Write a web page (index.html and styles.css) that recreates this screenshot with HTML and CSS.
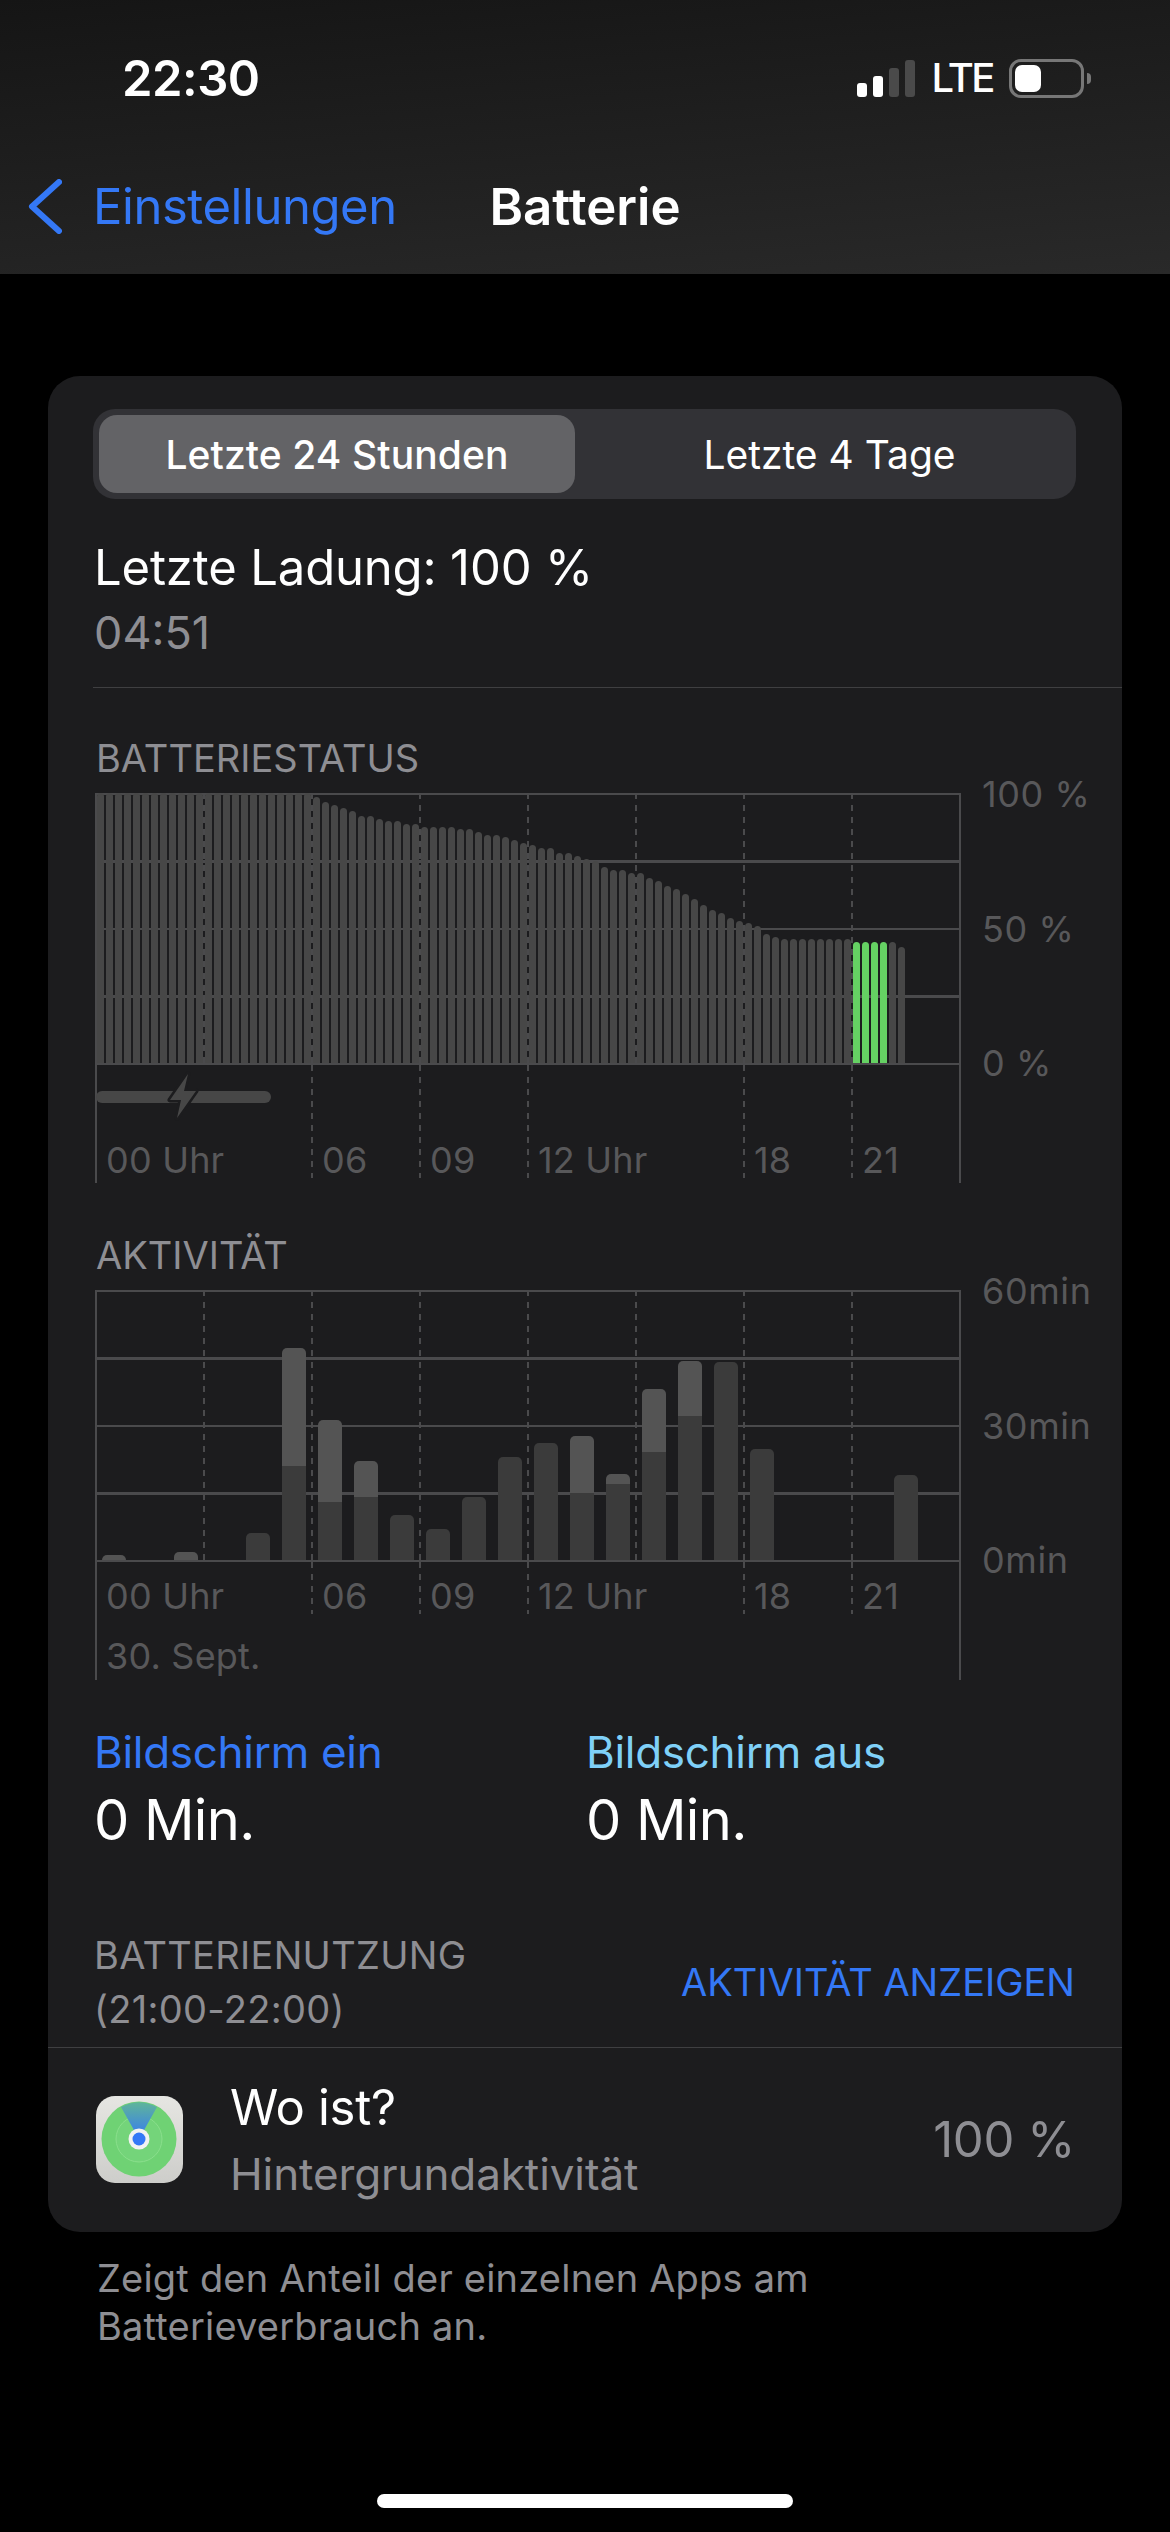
FILE: index.html
```html
<!DOCTYPE html>
<html lang="de">
<head>
    <meta charset="UTF-8">
    <meta name="viewport" content="width=device-width, initial-scale=1.0">
    <title>Batterie</title>
    <link rel="stylesheet" href="styles.css">
</head>
<body>
    <div class="page">
        <header class="top-bar">
            <div class="status">
                <span class="time">22:30</span>
                <div class="status-right">
                    <div class="signal">
                        <i class="s1"></i><i class="s2"></i><i class="s3"></i><i class="s4"></i>
                    </div>
                    <span class="lte">LTE</span>
                    <div class="battery"><div class="battery-fill"></div></div>
                    <div class="battery-nub"></div>
                </div>
            </div>
            <nav class="nav">
                <a class="back">
                    <svg class="chevron" width="34" height="55" viewBox="0 0 34 55"><path d="M31 3 L4 27.5 L31 52" fill="none" stroke="#3478f6" stroke-width="6" stroke-linecap="round" stroke-linejoin="round"/></svg>
                    <span>Einstellungen</span>
                </a>
                <h1>Batterie</h1>
            </nav>
        </header>

        <main class="card">
            <div class="segment">
                <div class="segment-item selected">Letzte 24 Stunden</div>
                <div class="segment-item">Letzte 4 Tage</div>
            </div>

            <div class="last-charge">Letzte Ladung: 100 %</div>
            <div class="last-time">04:51</div>
            <div class="divider inset"></div>

            <section class="chart chart-battery">
                <h2 class="chart-title">BATTERIESTATUS</h2>
                <div class="plot-row">
                    <div class="plot">
                        <div class="bars" id="batteryBars"></div>
                        <div class="grid"><i></i><i></i><i></i><i></i><i></i><i></i><i></i><i></i></div>
                    </div>
                    <div class="y-labels"><span>100 %</span><span>50 %</span><span>0 %</span></div>
                </div>
                <div class="axis">
                    <div class="axis-cells">
                        <div class="axis-cell first">
                            <div class="charge">
                                <svg class="bolt" width="40" height="52" viewBox="0 0 40 52"><path d="M25 4 L7 30 L18 30 L14 48 L33 21 L21 21 Z" fill="#474747" stroke="#1c1c1e" stroke-width="5" stroke-linejoin="round" paint-order="stroke"/></svg>
                            </div>
                            <span>00 Uhr</span>
                        </div>
                        <div class="axis-cell"><span>06</span></div>
                        <div class="axis-cell"><span>09</span></div>
                        <div class="axis-cell"><span>12 Uhr</span></div>
                        <div class="axis-cell"><span>18</span></div>
                        <div class="axis-cell"><span>21</span></div>
                    </div>
                </div>
            </section>

            <section class="chart chart-activity">
                <h2 class="chart-title">AKTIVITÄT</h2>
                <div class="plot-row">
                    <div class="plot">
                        <div class="grid"><i></i><i></i><i></i><i></i><i></i><i></i><i></i><i></i></div>
                        <div class="bars" id="activityBars"></div>
                    </div>
                    <div class="y-labels"><span>60min</span><span>30min</span><span>0min</span></div>
                </div>
                <div class="axis">
                    <div class="axis-cells">
                        <div class="axis-cell first"><span>00 Uhr</span></div>
                        <div class="axis-cell"><span>06</span></div>
                        <div class="axis-cell"><span>09</span></div>
                        <div class="axis-cell"><span>12 Uhr</span></div>
                        <div class="axis-cell"><span>18</span></div>
                        <div class="axis-cell"><span>21</span></div>
                    </div>
                    <div class="axis-date">30. Sept.</div>
                </div>
            </section>

            <div class="stats">
                <div>
                    <div class="stat-label blue">Bildschirm ein</div>
                    <div class="stat-value">0 Min.</div>
                </div>
                <div>
                    <div class="stat-label light-blue">Bildschirm aus</div>
                    <div class="stat-value">0 Min.</div>
                </div>
            </div>

            <div class="usage-head">
                <div class="usage-title">BATTERIENUTZUNG<br>(21:00-22:00)</div>
                <a class="usage-link">AKTIVITÄT ANZEIGEN</a>
            </div>
            <div class="divider"></div>

            <div class="app-row">
                <svg class="app-icon" width="87" height="87" viewBox="0 0 87 87">
                    <defs>
                        <linearGradient id="iconBg" x1="0" y1="0" x2="0" y2="1">
                            <stop offset="0" stop-color="#e6e6e2"/>
                            <stop offset="1" stop-color="#cdcdca"/>
                        </linearGradient>
                        <linearGradient id="iconCone" x1="0" y1="0" x2="0" y2="1">
                            <stop offset="0" stop-color="#5fb59a"/>
                            <stop offset="1" stop-color="#3478f6"/>
                        </linearGradient>
                    </defs>
                    <rect width="87" height="87" rx="19" fill="url(#iconBg)"/>
                    <circle cx="43" cy="43" r="37.5" fill="#6fd274"/>
                    <circle cx="43" cy="43" r="23" fill="#74d47a" stroke="#8adf8c" stroke-width="1"/>
                    <path d="M43 43 L25 11 Q43 1.500 61 11 Z" fill="url(#iconCone)"/>
                    <circle cx="43" cy="43" r="10.500" fill="#f2f2f2"/>
                    <circle cx="43" cy="43" r="6.500" fill="#3478f6"/>
                </svg>
                <div class="app-text">
                    <div class="app-name">Wo ist?</div>
                    <div class="app-sub">Hintergrundaktivität</div>
                </div>
                <div class="app-percent">100 %</div>
            </div>
        </main>

        <p class="footnote">Zeigt den Anteil der einzelnen Apps am<br>Batterieverbrauch an.</p>

        <div class="home-bar"></div>
    </div>

    <script src="chart.js"></script>
</body>
</html>
```

FILE: styles.css
```css
* {
    margin: 0;
    padding: 0;
    box-sizing: border-box;
}

body {
    background: #000;
    color: #fff;
    font-family: 'Inter', 'Liberation Sans', sans-serif;
}

.page {
    width: 1170px;
    height: 2532px;
    display: flex;
    flex-direction: column;
    overflow: hidden;
}

/* status bar + navigation */
.top-bar {
    height: 274px;
    flex: none;
    background: linear-gradient(175deg, #151515, #292929);
}

.status {
    height: 156px;
    padding: 0 79px 0 122px;
    display: flex;
    align-items: center;
    justify-content: space-between;
}

.time {
    font-size: 49px;
    font-weight: 600;
    letter-spacing: -0.5px;
}

.status-right {
    display: flex;
    align-items: center;
}

.signal {
    display: flex;
    align-items: flex-end;
    gap: 6px;
    height: 37px;
    margin-right: 16px;
}

.signal i {
    width: 10px;
    background: #fff;
    border-radius: 3px;
}

.signal .s1 { height: 14px; }
.signal .s2 { height: 21px; }
.signal .s3 { height: 29px; background: #4a4a4a; }
.signal .s4 { height: 37px; background: #4a4a4a; }

.lte {
    font-size: 40px;
    font-weight: 500;
    line-height: 40px;
    letter-spacing: -2.5px;
    margin-right: 16px;
}

.battery {
    width: 75px;
    height: 39px;
    border: 3px solid #777;
    border-radius: 12px;
    padding: 3px;
}

.battery-fill {
    width: 26px;
    height: 100%;
    background: #fff;
    border-radius: 7px;
}

.battery-nub {
    width: 4px;
    height: 11px;
    margin-left: 3px;
    background: #777;
    border-radius: 0 4px 4px 0;
}

.nav {
    display: grid;
    grid-template-columns: 1fr auto 1fr;
    align-items: center;
    height: 100px;
    padding: 0 28px;
}

.back {
    display: flex;
    align-items: center;
    gap: 31px;
    color: #3478f6;
    font-size: 49px;
    letter-spacing: -0.45px;
}

.nav h1 {
    font-size: 51px;
    font-weight: 600;
}

/* main card */
.card {
    margin: 102px 48px 0;
    height: 1856px;
    flex: none;
    background: #1c1c1e;
    border-radius: 32px;
    overflow: hidden;
}

.segment {
    margin: 33px 46px 0 45px;
    height: 90px;
    padding: 6px;
    display: grid;
    grid-template-columns: 476px 1fr;
    background: #323236;
    border-radius: 22px;
}

.segment-item {
    display: flex;
    align-items: center;
    justify-content: center;
    font-size: 39px;
    letter-spacing: 0;
    padding-left: 14px;
}

.segment-item.selected {
    font-weight: 500;
    letter-spacing: 0.1px;
    background: #636366;
    border-radius: 18px;
    padding-left: 0;
}

.last-charge {
    margin: 39px 0 0 46px;
    font-size: 49px;
    line-height: 60px;
    letter-spacing: -0.15px;
}

.last-time {
    margin: 10px 0 0 46px;
    font-size: 45px;
    line-height: 50px;
    color: #8e8e93;
}

.divider {
    height: 1px;
    background: #3f3f41;
}

.divider.inset {
    margin: 29px 0 0 45px;
}

/* charts */
.chart {
    margin-left: 47px;
}

.chart-battery {
    margin-top: 47px;
}

.chart-activity {
    margin-top: 49px;
}

.chart-title {
    margin: 0 0 12px 1px;
    font-size: 38px;
    font-weight: 400;
    line-height: 46px;
    color: #8e8e93;
}

.plot-row {
    display: flex;
    align-items: flex-start;
}

.plot {
    position: relative;
    width: 866px;
    height: 272px;
    flex: none;
    border-left: 2px solid #4a4a4c;
    border-right: 2px solid #4a4a4c;
    background: repeating-linear-gradient(to bottom, #4a4a4c 0, #4a4a4c 2px, transparent 2px, transparent 67.5px);
}

.grid {
    position: absolute;
    inset: 0;
    display: grid;
    grid-template-columns: 106px repeat(7, 108px);
}

.grid i:not(:first-child),
.axis-cell:not(.first) {
    background: linear-gradient(#4a4a4c 6px, transparent 6px) left top / 2px 12px repeat-y;
}

.bars {
    position: absolute;
    left: 0;
    right: 0;
    bottom: 2px;
    top: 0;
    display: flex;
    align-items: flex-end;
}

#batteryBars {
    gap: 2px;
}

.battery-bar {
    width: 7px;
    flex: none;
    background: #474747;
    border-radius: 3.500px 3.500px 0 0;
}

.battery-bar.green {
    background: #65d163;
}

#activityBars {
    gap: 12px;
    padding-left: 5px;
}

.activity-bar {
    width: 24px;
    flex: none;
    display: flex;
    flex-direction: column;
    border-radius: 5px 5px 0 0;
    overflow: hidden;
}

.activity-bar .light { background: #545454; }
.activity-bar .dark { background: #3b3b3b; }

.y-labels {
    height: 309px;
    margin: -19px 0 -18px 21px;
    display: flex;
    flex-direction: column;
    justify-content: space-between;
    font-size: 36px;
    line-height: 40px;
    letter-spacing: 0.6px;
    color: #58585a;
}

.axis {
    width: 866px;
    height: 118px;
    border-left: 2px solid #4a4a4c;
    border-right: 2px solid #4a4a4c;
    font-size: 36px;
    line-height: 34px;
    letter-spacing: 0.2px;
    color: #58585a;
}

.axis-cells {
    display: grid;
    grid-template-columns: 214px 108px 108px 216px 108px 108px;
}

.axis-cell {
    display: flex;
    flex-direction: column;
    justify-content: flex-end;
    padding: 0 0 1px 11px;
}

.axis-cell.first {
    padding-left: 9px;
}

.chart-battery .axis-cell {
    height: 113px;
}

.chart-activity .axis-cell {
    height: 52px;
}

.charge {
    position: relative;
    width: 175px;
    height: 12px;
    margin: 0 0 40px -10px;
    background: #474747;
    border-radius: 6px;
}

.bolt {
    position: absolute;
    left: 67px;
    top: -21px;
}

.axis-date {
    margin: 25px 0 0 9px;
}

/* screen on/off */
.stats {
    margin: 45px 0 0 46px;
    display: grid;
    grid-template-columns: 492px 1fr;
}

.stat-label {
    font-size: 44px;
    line-height: 54px;
    letter-spacing: -0.3px;
}

.blue { color: #3478f6; }
.light-blue { color: #7fd0f8; }

.stat-value {
    margin-top: 6px;
    font-size: 56px;
    line-height: 70px;
    letter-spacing: -0.6px;
}

/* usage */
.usage-head {
    margin: 73px 47px 0 46px;
    display: flex;
    align-items: center;
    justify-content: space-between;
}

.usage-title {
    font-size: 38px;
    line-height: 54px;
    letter-spacing: 0.3px;
    color: #8e8e93;
}

.usage-link {
    font-size: 38px;
    color: #3478f6;
}

.usage-head + .divider {
    margin-top: 11px;
}

.app-row {
    height: 183px;
    padding: 0 47px 0 48px;
    display: flex;
    align-items: center;
}

.app-icon {
    flex: none;
    margin-right: 47px;
}

.app-text {
    flex: 1;
}

.app-name {
    font-size: 49px;
    line-height: 60px;
    letter-spacing: -0.3px;
}

.app-sub {
    margin-top: 9px;
    font-size: 44px;
    line-height: 54px;
    letter-spacing: -0.1px;
    color: #8e8e93;
}

.app-percent {
    font-size: 49px;
    letter-spacing: -0.4px;
    color: #8e8e93;
}

.footnote {
    margin: 22px 0 0 97px;
    font-size: 38px;
    line-height: 48px;
    letter-spacing: 0.2px;
    color: #8e8e93;
}

.home-bar {
    width: 416px;
    height: 14px;
    margin: auto 0 24px 377px;
    flex: none;
    background: #fff;
    border-radius: 7px;
}
```

FILE: chart.js
```js
// Batteriestatus: height of each 15 minute bar in px (270 = 100 %)
const batteryHeights = [
    270, 270, 270, 270, 270, 270, 270, 270, 270, 270, 270, 270,
    270, 270, 270, 270, 270, 270, 270, 270, 270, 270, 270, 270,
    266, 261, 258, 255, 252, 247, 247, 244, 242, 242, 239, 239,
    236, 236, 236, 236, 234, 234, 231, 228, 228, 226, 223, 220,
    218, 215, 215, 210, 210, 207, 204, 202, 196, 193, 193, 190,
    190, 185, 182, 177, 174, 169, 164, 158, 153, 150, 145, 142,
    140, 137, 129, 126, 124, 124, 124, 124, 124, 124, 124, 124,
    121, 121, 121, 121, 121, 116
];

// Aktivität: [dark part, light part] per hour
const activityBars = [
    [0, 5], [0, 0], [0, 8], [0, 0], [27, 0], [94, 118], [58, 82], [63, 36],
    [45, 0], [31, 0], [63, 0], [103, 0], [117, 0], [67, 57], [76, 10], [108, 63],
    [144, 55], [198, 0], [111, 0], [0, 0], [0, 0], [0, 0], [85, 0], [0, 0]
];

const batteryEl = document.getElementById('batteryBars');
batteryHeights.forEach((height, i) => {
    const bar = document.createElement('div');
    bar.className = 'battery-bar';
    if (i >= 84 && i <= 87) bar.classList.add('green');
    bar.style.height = height + 'px';
    batteryEl.appendChild(bar);
});

const activityEl = document.getElementById('activityBars');
activityBars.forEach(([dark, light]) => {
    const bar = document.createElement('div');
    bar.className = 'activity-bar';
    if (light) {
        const part = document.createElement('div');
        part.className = 'light';
        part.style.height = light + 'px';
        bar.appendChild(part);
    }
    if (dark) {
        const part = document.createElement('div');
        part.className = 'dark';
        part.style.height = dark + 'px';
        bar.appendChild(part);
    }
    activityEl.appendChild(bar);
});
```
